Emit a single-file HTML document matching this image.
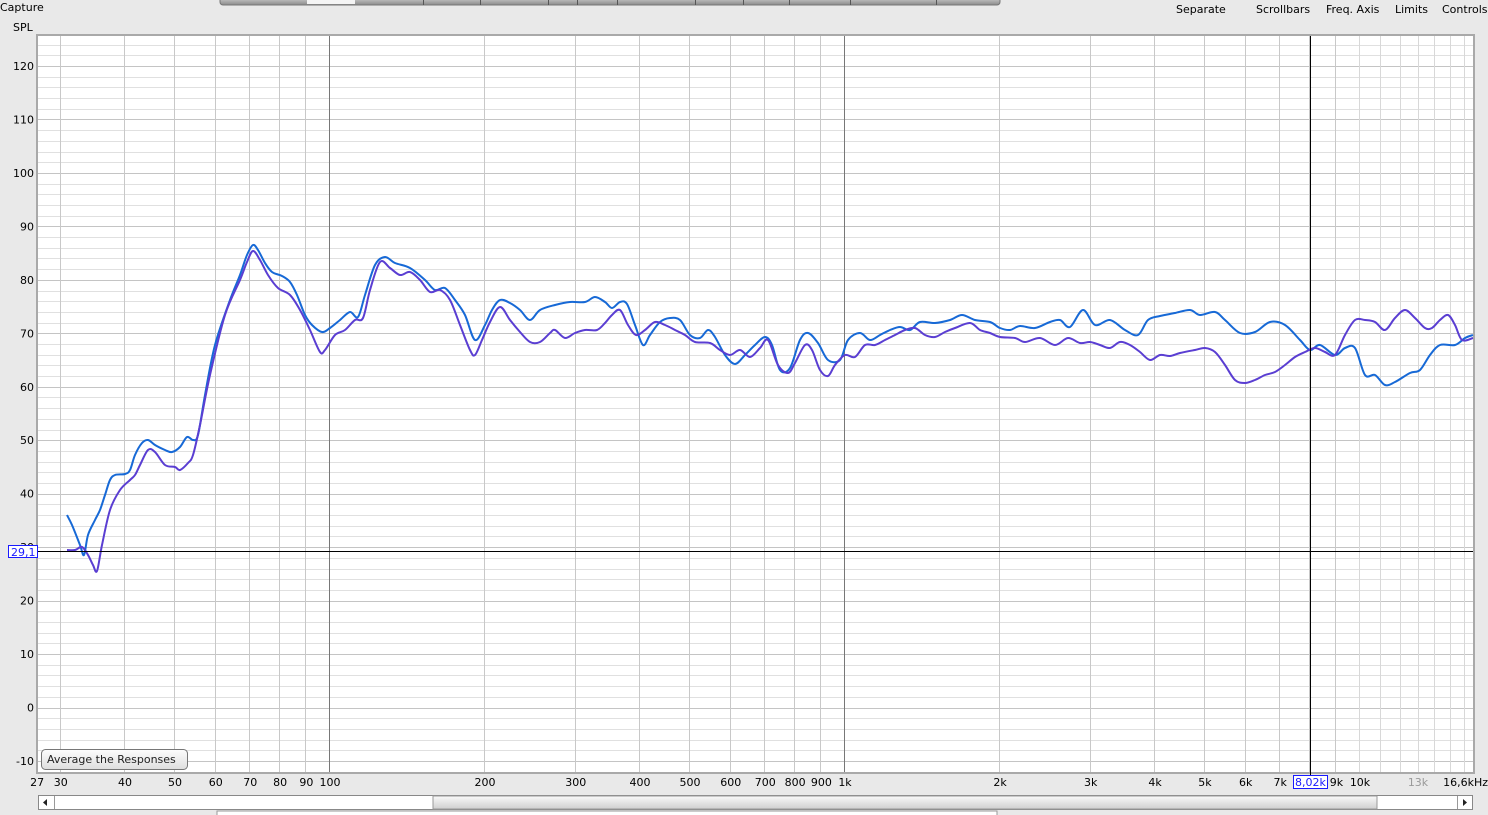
<!DOCTYPE html>
<html><head><meta charset="utf-8"><style>
html,body{margin:0;padding:0;background:#e9e9e9;width:1488px;height:815px;overflow:hidden;font-family:"DejaVu Sans","Liberation Sans",sans-serif;font-size:11px;color:#111}
svg{position:absolute;left:0;top:0}
</style></head><body>
<svg id="s" width="1488" height="815" xmlns="http://www.w3.org/2000/svg" font-family="DejaVu Sans, Liberation Sans, sans-serif" font-size="11">
<defs>
<linearGradient id="tb" x1="0" y1="0" x2="0" y2="1"><stop offset="0" stop-color="#dcdcdc"/><stop offset="1" stop-color="#8a8a8a"/></linearGradient>
<linearGradient id="th" x1="0" y1="0" x2="0" y2="1"><stop offset="0" stop-color="#fafafa"/><stop offset="1" stop-color="#cfcfcf"/></linearGradient>
<linearGradient id="bt" x1="0" y1="0" x2="0" y2="1"><stop offset="0" stop-color="#fdfdfd"/><stop offset="1" stop-color="#dedede"/></linearGradient>
</defs>
<rect x="220" y="-4" width="780" height="9" rx="3" fill="url(#tb)" stroke="#777"/>
<rect x="307" y="-4" width="48" height="8" fill="#f4f4f4"/>
<g stroke="#555"><line x1="423.5" y1="0" x2="423.5" y2="5"/><line x1="480.5" y1="0" x2="480.5" y2="5"/><line x1="548.5" y1="0" x2="548.5" y2="5"/><line x1="577.5" y1="0" x2="577.5" y2="5"/><line x1="617.5" y1="0" x2="617.5" y2="5"/><line x1="695.5" y1="0" x2="695.5" y2="5"/><line x1="743.5" y1="0" x2="743.5" y2="5"/><line x1="789.5" y1="0" x2="789.5" y2="5"/><line x1="850.5" y1="0" x2="850.5" y2="5"/><line x1="936.5" y1="0" x2="936.5" y2="5"/></g>
<text x="0" y="11">Capture</text>
<text x="13" y="31">SPL</text>
<text x="1176" y="13">Separate</text>
<text x="1256" y="13">Scrollbars</text>
<text x="1326" y="13">Freq. Axis</text>
<text x="1395" y="13">Limits</text>
<text x="1442" y="13">Controls</text>
<rect x="36" y="34" width="1439" height="740" fill="#a9a9a9"/>
<rect x="38" y="36" width="1435" height="736" fill="#fff"/>
<g id="grid"></g>
<g id="lab"></g>
<path id="pb" fill="none" stroke="#1769d6" stroke-width="2" stroke-linejoin="round"/>
<path id="pp" fill="none" stroke="#5a3ed2" stroke-width="2" stroke-linejoin="round"/>
<line x1="38" y1="551.5" x2="1473" y2="551.5" stroke="#000"/>
<line x1="1310.5" y1="36" x2="1310.5" y2="785" stroke="#000"/>
<rect x="8.5" y="545.5" width="29" height="12" fill="#fff" stroke="#1a1aff"/>
<text x="11" y="556" fill="#1a1aff">29,1</text>
<rect x="1293.5" y="775.5" width="34" height="13" fill="#fff" stroke="#1a1aff"/>
<text x="1295" y="786" fill="#1a1aff">8,02k</text>
<rect x="41.5" y="749.5" width="146" height="20" rx="4" fill="url(#bt)" stroke="#777"/>
<text x="47" y="763" fill="#222">Average the Responses</text>
<rect x="38.5" y="795.5" width="1434" height="14" fill="#fff" stroke="#888"/>
<rect x="433" y="796" width="944" height="13" fill="url(#th)" stroke="#999"/>
<line x1="54.5" y1="796" x2="54.5" y2="809" stroke="#999"/>
<line x1="1457.5" y1="796" x2="1457.5" y2="809" stroke="#999"/>
<path d="M47 799 L43 802.5 L47 806Z" fill="#222"/>
<path d="M1463 799 L1467 802.5 L1463 806Z" fill="#222"/>
<rect x="217" y="811" width="780" height="6" fill="#fff" stroke="#999"/>
</svg>
<script>
var NS="http://www.w3.org/2000/svg";
function X(f){return 329+515*Math.log10(f/100);}
function Y(v){return 66+(120-v)*5.346;}
var g=document.getElementById('grid'),lab=document.getElementById('lab');
function line(x1,y1,x2,y2,c){var l=document.createElementNS(NS,'line');l.setAttribute('x1',x1);l.setAttribute('y1',y1);l.setAttribute('x2',x2);l.setAttribute('y2',y2);l.setAttribute('stroke',c);g.appendChild(l);}
function txt(x,y,s,a,c){var t=document.createElementNS(NS,'text');t.setAttribute('x',x);t.setAttribute('y',y);t.setAttribute('text-anchor',a);if(c)t.setAttribute('fill',c);t.textContent=s;lab.appendChild(t);}
for(var v=-14;v<=126;v+=2){var y=Math.round(Y(v))+0.5;if(y<37||y>771)continue;line(38,y,1473,y,v%10==0?'#c4c4c4':'#e0e0e0');}
var fs=[];for(var d=10;d<=10000;d*=10)for(var k=1;k<10;k++)fs.push(d*k);
fs.forEach(function(f){var x=Math.round(X(f))+0.5;if(x<39||x>1472)return;var maj=(f==100||f==1000||f==10000);line(x,36,x,772,maj?'#777':'#c8c8c8');});
for(var f=10000;f<=16000;f+=1000){var x=Math.round(X(f))+0.5;if(x<1472)line(x,36,x,772,'#d8d8d8');}
for(var v=-10;v<=120;v+=10){txt(34,Y(v)+4,String(v),'end');}
var xl=[[27,'27'],[30,'30'],[40,'40'],[50,'50'],[60,'60'],[70,'70'],[80,'80'],[90,'90'],[100,'100'],[200,'200'],[300,'300'],[400,'400'],[500,'500'],[600,'600'],[700,'700'],[800,'800'],[900,'900'],[1000,'1k'],[2000,'2k'],[3000,'3k'],[4000,'4k'],[5000,'5k'],[6000,'6k'],[7000,'7k'],[9000,'9k'],[10000,'10k']];
xl.forEach(function(a){txt(X(a[0])+1,786,a[1],'middle');});
txt(1418,786,'13k','middle','#999');txt(1488,786,'16,6kHz','end');
function smooth(s){var p=s.split(' ').map(function(q){return q.split(',').map(Number);});var d='M'+p[0][0]+' '+p[0][1];
for(var i=0;i<p.length-1;i++){var p0=p[i-1]||p[i],p1=p[i],p2=p[i+1],p3=p[i+2]||p2;
d+=' C'+(p1[0]+(p2[0]-p0[0])/6).toFixed(1)+' '+(p1[1]+(p2[1]-p0[1])/6).toFixed(1)+' '+(p2[0]-(p3[0]-p1[0])/6).toFixed(1)+' '+(p2[1]-(p3[1]-p1[1])/6).toFixed(1)+' '+p2[0]+' '+p2[1];}return d;}
var B="67,515 72,525 80,545 84,555 88,535 95,520 100,510 105,495 110,480 115,475 125,474 130,470 135,455 142,443 148,440 155,445 165,450 172,452 180,447 187,437 193,440 198,435 205,395 215,345 230,300 240,275 247,255 253,245 258,250 265,263 272,272 282,276 290,282 297,295 305,315 312,325 322,332 330,328 340,320 350,312 358,317 365,295 375,265 385,257 395,263 410,268 425,280 435,290 445,288 455,300 465,315 475,340 485,325 492,310 500,300 510,303 520,310 530,320 540,310 555,305 570,302 585,302 595,297 605,302 612,308 620,302 627,304 635,325 643,345 650,335 660,322 670,318 680,320 690,335 700,338 708,330 715,337 725,355 735,364 745,355 755,345 765,337 772,345 780,370 790,368 800,340 808,333 818,343 828,360 840,360 848,340 860,333 870,340 880,335 890,330 900,327 910,330 920,322 935,323 950,320 962,315 975,320 990,322 1000,328 1010,330 1020,326 1035,328 1050,322 1060,320 1070,327 1083,310 1095,325 1110,320 1125,330 1138,335 1148,320 1160,316 1175,313 1190,310 1200,315 1215,312 1225,320 1240,333 1255,332 1270,322 1285,325 1300,340 1310,350 1320,345 1335,355 1345,348 1355,348 1365,375 1375,375 1385,385 1395,382 1410,373 1420,370 1430,355 1440,345 1455,345 1465,338 1473,335";
var P="67,550 75,550 82,547 88,555 93,565 97,571 102,545 110,510 120,490 130,480 135,475 140,465 148,450 155,452 165,465 175,467 180,470 188,463 193,455 200,425 210,375 225,315 240,280 247,262 253,251 260,260 268,275 278,288 290,295 300,310 310,330 320,352 325,350 335,335 345,330 355,320 363,318 370,290 380,262 390,268 400,275 410,272 420,280 430,292 440,290 450,300 460,325 470,350 475,355 482,340 490,322 500,307 510,320 520,332 530,342 540,342 550,333 555,330 565,338 575,333 585,330 597,330 605,323 612,315 620,310 628,325 636,335 645,330 655,322 665,325 675,330 685,335 695,342 710,343 720,350 730,355 740,350 750,357 760,348 768,340 778,365 788,373 795,363 805,345 812,350 820,370 828,376 835,365 845,355 855,357 865,345 875,345 885,340 895,335 905,330 915,328 925,335 935,337 945,332 955,328 970,323 980,330 990,333 1000,337 1015,338 1025,342 1040,338 1055,345 1068,338 1080,343 1090,342 1100,345 1110,348 1120,342 1130,345 1140,352 1150,360 1160,355 1170,356 1180,353 1195,350 1205,348 1215,352 1225,365 1235,380 1245,383 1255,380 1265,375 1275,372 1285,365 1295,357 1305,352 1315,348 1325,352 1335,355 1345,335 1355,320 1365,320 1375,322 1385,330 1395,318 1405,310 1415,318 1425,328 1432,328 1440,320 1448,315 1455,325 1462,340 1473,338";
document.getElementById('pb').setAttribute('d',smooth(B));
document.getElementById('pp').setAttribute('d',smooth(P));
</script>
</body></html>
